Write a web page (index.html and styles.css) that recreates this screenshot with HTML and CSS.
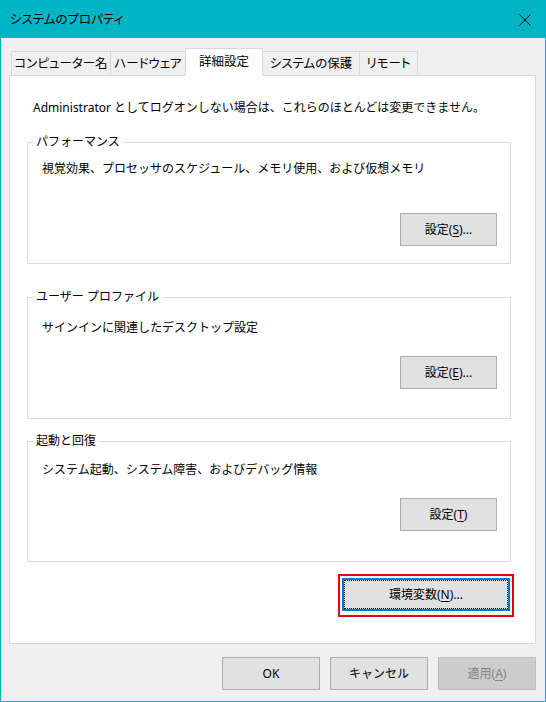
FILE: index.html
```html
<!DOCTYPE html>
<html lang="ja">
<head>
<meta charset="utf-8">
<title>システムのプロパティ</title>
<link rel="stylesheet" href="styles.css">
</head>
<body>
<div class="window">
  <header class="titlebar">
    <span class="title">システムのプロパティ</span>
    <svg class="close" width="12" height="12" viewBox="0 0 12 12" aria-label="閉じる">
      <path d="M0.5 0.5L11.5 11.5M11.5 0.5L0.5 11.5" stroke="#000" stroke-width="1" fill="none"/>
    </svg>
  </header>
  <div class="client">
    <div class="tabs">
      <div class="tab tab-name">コンピューター名</div>
      <div class="tab tab-hw">ハードウェア</div>
      <div class="tab tab-adv active">詳細設定</div>
      <div class="tab tab-prot">システムの保護</div>
      <div class="tab tab-remote">リモート</div>
    </div>
    <div class="panel">
      <p class="intro">Administrator としてログオンしない場合は、これらのほとんどは変更できません。</p>
      <fieldset class="group group-perf">
        <legend>パフォーマンス</legend>
        <p class="desc">視覚効果、プロセッサのスケジュール、メモリ使用、および仮想メモリ</p>
        <div class="actions"><button class="btn">設定(<u>S</u>)...</button></div>
      </fieldset>
      <fieldset class="group group-profile">
        <legend>ユーザー プロファイル</legend>
        <p class="desc">サインインに関連したデスクトップ設定</p>
        <div class="actions"><button class="btn">設定(<u>E</u>)...</button></div>
      </fieldset>
      <fieldset class="group group-startup">
        <legend>起動と回復</legend>
        <p class="desc">システム起動、システム障害、およびデバッグ情報</p>
        <div class="actions"><button class="btn">設定(<u>T</u>)</button></div>
      </fieldset>
      <div class="env-row">
        <div class="highlight">
          <button class="btn btn-default">環境変数(<u>N</u>)...</button>
        </div>
      </div>
    </div>
    <div class="footer">
      <button class="btn btn-dlg">OK</button>
      <button class="btn btn-dlg">キャンセル</button>
      <button class="btn btn-dlg" disabled>適用(<u>A</u>)</button>
    </div>
  </div>
</div>
</body>
</html>
```

FILE: styles.css
```css
* {
  box-sizing: border-box;
}

body {
  margin: 0;
  font-family: "Noto Sans", "Noto Sans CJK JP", sans-serif;
  font-size: 12px;
  color: #000;
  background: #fff;
}

.window {
  width: 546px;
  height: 702px;
  border: 1px solid #00b5c4;
  background: #f0f0f0;
  display: flex;
  flex-direction: column;
}

.titlebar {
  flex: none;
  height: 37px;
  background: #00b5c4;
  display: flex;
  align-items: center;
  justify-content: space-between;
  padding: 0 14px 0 9px;
}

.title {
  font-size: 12.5px;
  line-height: 16px;
  font-feature-settings: "palt";
}

.close {
  display: block;
}

.client {
  flex: 1;
  display: flex;
  flex-direction: column;
}

.tabs {
  flex: none;
  height: 37px;
  display: flex;
  align-items: flex-end;
  padding-left: 10px;
}

.tab {
  height: 24px;
  border: 1px solid #d9d9d9;
  border-bottom: none;
  background: #f0f0f0;
  display: flex;
  align-items: center;
  justify-content: center;
  white-space: nowrap;
  line-height: 16px;
  font-size: 12.5px;
  font-feature-settings: "palt";
}

.tab + .tab {
  margin-left: -1px;
}

.tab-name { width: 100px; }
.tab-hw { width: 76px; }
.tab-adv { width: 78px; }
.tab-prot { width: 98px; }
.tab-remote { width: 59px; }

.tab.active {
  height: 28px;
  margin-bottom: -1px;
  background: #fff;
  position: relative;
  z-index: 1;
  padding-bottom: 2px;
}

.panel {
  flex: none;
  height: 569px;
  margin: 0 9px 0 8px;
  border: 1px solid #d9d9d9;
  background: #fff;
  padding-top: 24px;
}

.intro {
  margin: 0;
  padding-left: 23px;
  line-height: 16px;
  white-space: nowrap;
}

.group {
  margin: 0 0 0 17px;
  width: 484px;
  border: 1px solid #dcdcdc;
  padding: 0 13px 0 14px;
  min-width: 0;
}

.group legend {
  margin-left: -9px;
  padding: 0 3px;
  line-height: 16px;
}

.desc {
  margin: 0;
  line-height: 16px;
  white-space: nowrap;
}

.actions {
  display: flex;
  justify-content: flex-end;
}

.group-perf { margin-top: 18px; padding-top: 11px; padding-bottom: 17px; }
.group-perf .actions { margin-top: 36px; }

.group-profile { margin-top: 25px; padding-top: 15px; padding-bottom: 29px; }
.group-profile .actions { margin-top: 20px; }

.group-startup { margin-top: 14px; padding-top: 13px; padding-bottom: 30px; }
.group-startup .actions { margin-top: 20px; }

.btn {
  font: inherit;
  color: #000;
  width: 97px;
  height: 33px;
  padding: 0;
  border: 1px solid #adadad;
  background: #e1e1e1;
  line-height: 16px;
  white-space: nowrap;
}

.btn u {
  text-underline-offset: 2px;
}

.env-row {
  display: flex;
  justify-content: flex-end;
  margin-top: 12px;
  padding-right: 21px;
}

.highlight {
  border: 2px solid #e8000b;
  padding: 2px 2px 4px;
  background: #fff;
}

.btn-default {
  width: 168px;
  border: 2px solid #0078d7;
  position: relative;
}

.btn-default::after {
  content: "";
  position: absolute;
  inset: 0;
  border: 1px dotted #000;
}

.footer {
  display: flex;
  justify-content: flex-end;
  gap: 10px;
  margin-top: 13px;
  padding-right: 9px;
}

.btn-dlg {
  width: 98px;
}

.btn-dlg:disabled {
  background: #cccccc;
  border-color: #bfbfbf;
  color: #838383;
}
```
